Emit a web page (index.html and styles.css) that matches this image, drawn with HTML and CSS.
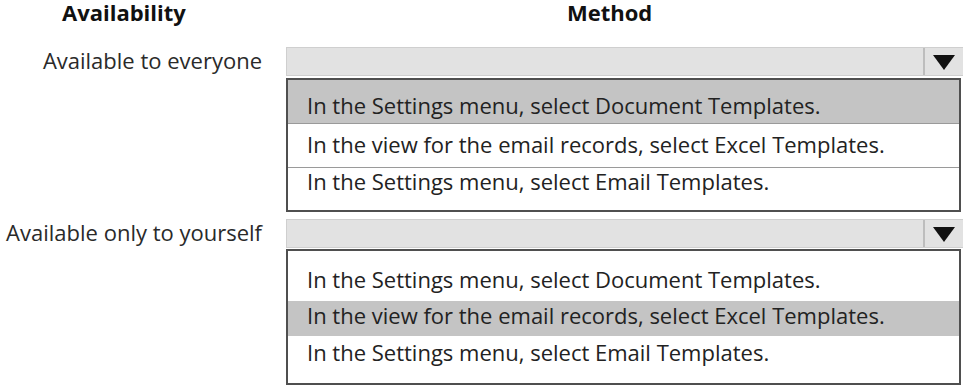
FILE: index.html
```html
<!DOCTYPE html>
<html lang="en">
<head>
    <meta charset="UTF-8">
    <title>Availability and Method</title>
    <link rel="stylesheet" href="styles.css">
</head>
<body>
<div class="answer-area">
    <div class="head-row">
        <h2 class="head-availability">Availability</h2>
        <h2 class="head-method">Method</h2>
    </div>

    <div class="answer-row first">
        <div class="label">Available to everyone</div>
        <div class="select">
            <div class="select-bar">
                <span class="arrow-box">
                    <svg width="22" height="15" viewBox="0 0 22 15"><polygon points="0,0 22,0 11,15" fill="#111"/></svg>
                </span>
            </div>
            <ul class="options lined">
                <li class="selected">In the Settings menu, select Document Templates.</li>
                <li>In the view for the email records, select Excel Templates.</li>
                <li>In the Settings menu, select Email Templates.</li>
            </ul>
        </div>
    </div>

    <div class="answer-row second">
        <div class="label">Available only to yourself</div>
        <div class="select">
            <div class="select-bar">
                <span class="arrow-box">
                    <svg width="22" height="15" viewBox="0 0 22 15"><polygon points="0,0 22,0 11,15" fill="#111"/></svg>
                </span>
            </div>
            <ul class="options plain">
                <li>In the Settings menu, select Document Templates.</li>
                <li class="selected">In the view for the email records, select Excel Templates.</li>
                <li>In the Settings menu, select Email Templates.</li>
            </ul>
        </div>
    </div>
</div>
</body>
</html>
```

FILE: styles.css
```css
body {
    margin: 0;
    background-color: #ffffff;
    font-family: "Open Sans", "Noto Sans", sans-serif;
    color: #222222;
}

.answer-area {
    width: 963px;
}

.head-row {
    display: grid;
    grid-template-columns: 286px 677px;
    height: 47px;
}

.head-row h2 {
    margin: 0;
    font-size: 22px;
    font-weight: 700;
    line-height: 24px;
    color: #111111;
}

.head-availability {
    padding-left: 62px;
}

.head-method {
    padding-left: 281px;
}

.answer-row {
    display: grid;
    grid-template-columns: 286px 677px;
}

.answer-row.second {
    margin-top: 7px;
}

.label {
    font-size: 22px;
    height: 29px;
    line-height: 27px;
    text-align: right;
    padding-right: 24px;
    color: #2a2a2a;
}

.select-bar {
    height: 27px;
    background-color: #e2e2e2;
    border: 1px solid #cfcfcf;
    border-right: none;
    display: flex;
    justify-content: flex-end;
}

.arrow-box {
    width: 38px;
    border-left: 2px solid #bdbdbd;
    display: flex;
    align-items: center;
    justify-content: center;
    padding-top: 2px;
}

.options {
    list-style: none;
    margin: 1px 0 0 0;
    padding: 0;
    width: 671px;
    border: 2px solid #4f4f4f;
    font-size: 22px;
}

.options li {
    padding-left: 19px;
    color: #222222;
}

.options li.selected {
    background-color: #c4c4c4;
}

.lined {
    margin-top: 2px;
}

.lined li {
    height: 43px;
    border-bottom: 1px solid #9a9a9a;
}

.lined li:first-child {
    line-height: 50px;
}

.lined li:nth-child(2) {
    line-height: 41px;
}

.lined li:last-child {
    border-bottom: none;
    height: 42px;
    line-height: 27px;
}

.plain {
    padding: 12px 0 10px 0;
}

.plain li:first-child {
    height: 38px;
    line-height: 32px;
}

.plain li:nth-child(2) {
    height: 35px;
    line-height: 28px;
}

.plain li:last-child {
    height: 37px;
    line-height: 33px;
}
```
